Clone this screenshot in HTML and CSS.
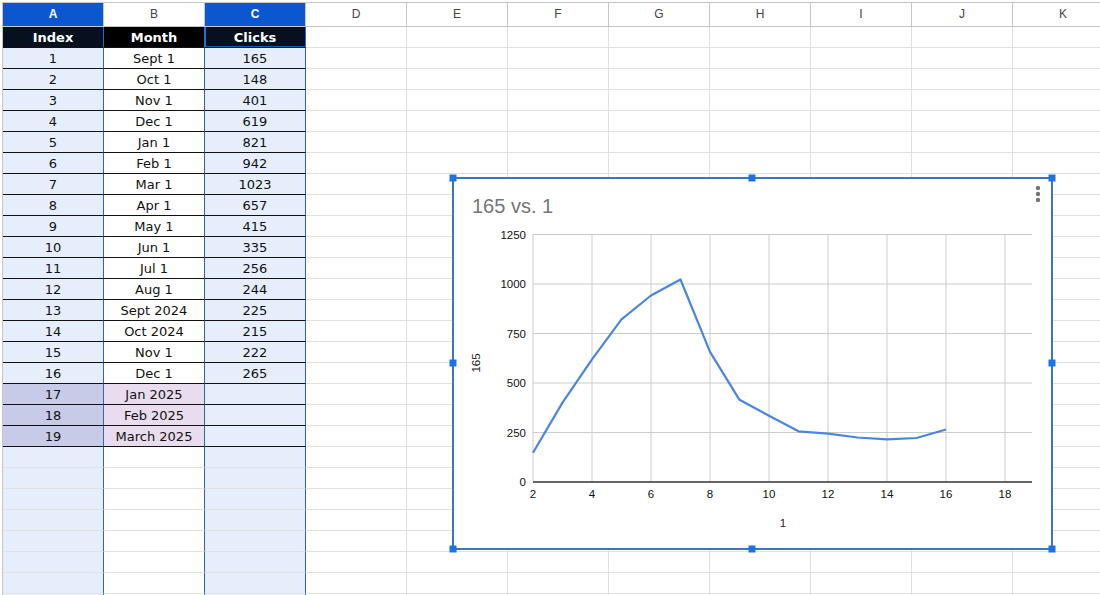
FILE: index.html
```html
<!DOCTYPE html>
<html lang="en">
<head>
    <meta charset="UTF-8">
    <meta name="viewport" content="width=device-width, initial-scale=1.0">
    <title>Clicks - Sheet</title>
    <link rel="stylesheet" href="styles.css">
</head>
<body>
    <div class="sheet" id="sheet"></div>

    <div class="chart">
        <svg width="600" height="371" viewBox="0 0 600 371">
            <rect class="frame" x="1" y="0" width="599" height="371"></rect>

            <text class="chart-title" x="20" y="35">165 vs. 1</text>
            <circle class="dot" cx="586" cy="10" r="2.2"></circle>
            <circle class="dot" cx="586" cy="16" r="2.2"></circle>
            <circle class="dot" cx="586" cy="22" r="2.2"></circle>

            <!-- gridlines -->
            <g class="grid">
                <line x1="81" y1="56.5" x2="580" y2="56.5"></line>
                <line x1="81" y1="106" x2="580" y2="106"></line>
                <line x1="81" y1="155.5" x2="580" y2="155.5"></line>
                <line x1="81" y1="205" x2="580" y2="205"></line>
                <line x1="81" y1="254.5" x2="580" y2="254.5"></line>
                <line x1="81" y1="56.5" x2="81" y2="304"></line>
                <line x1="140" y1="56.5" x2="140" y2="304"></line>
                <line x1="199" y1="56.5" x2="199" y2="304"></line>
                <line x1="258" y1="56.5" x2="258" y2="304"></line>
                <line x1="317" y1="56.5" x2="317" y2="304"></line>
                <line x1="376" y1="56.5" x2="376" y2="304"></line>
                <line x1="435" y1="56.5" x2="435" y2="304"></line>
                <line x1="494" y1="56.5" x2="494" y2="304"></line>
                <line x1="553" y1="56.5" x2="553" y2="304"></line>
            </g>
            <line class="baseline" x1="81" y1="304" x2="580" y2="304"></line>

            <!-- y axis labels -->
            <g class="ticks y-ticks">
                <text x="74" y="61">1250</text>
                <text x="74" y="110">1000</text>
                <text x="74" y="160">750</text>
                <text x="74" y="209">500</text>
                <text x="74" y="259">250</text>
                <text x="74" y="308">0</text>
            </g>

            <!-- x axis labels -->
            <g class="ticks x-ticks">
                <text x="81" y="320">2</text>
                <text x="140" y="320">4</text>
                <text x="199" y="320">6</text>
                <text x="258" y="320">8</text>
                <text x="317" y="320">10</text>
                <text x="376" y="320">12</text>
                <text x="435" y="320">14</text>
                <text x="494" y="320">16</text>
                <text x="553" y="320">18</text>
            </g>

            <text class="axis-title" x="331" y="349">1</text>
            <text class="axis-title" transform="translate(28 185) rotate(-90)">165</text>

            <polyline class="series" points="81,274.7 110.5,224.6 140,181.4 169.5,141.4 199,117.5 228.5,101.5 258,173.9 287.5,221.8 317,237.7 346.5,253.3 376,255.7 405.5,259.5 435,261.4 464.5,260 494,251.5"></polyline>

            <!-- resize handles -->
            <g class="handles">
                <rect x="-2.5" y="-3.5" width="7" height="7"></rect>
                <rect x="296.5" y="-3.5" width="7" height="7"></rect>
                <rect x="596.5" y="-3.5" width="7" height="7"></rect>
                <rect x="-2.5" y="181.5" width="7" height="7"></rect>
                <rect x="596.5" y="181.5" width="7" height="7"></rect>
                <rect x="-2.5" y="367.5" width="7" height="7"></rect>
                <rect x="296.5" y="367.5" width="7" height="7"></rect>
                <rect x="596.5" y="367.5" width="7" height="7"></rect>
            </g>
        </svg>
    </div>

    <script>
        const columns = 'ABCDEFGHIJK'.split('');
        const rows = [
            ['Index', 'Month', 'Clicks'],
            ['1', 'Sept 1', '165'],
            ['2', 'Oct 1', '148'],
            ['3', 'Nov 1', '401'],
            ['4', 'Dec 1', '619'],
            ['5', 'Jan 1', '821'],
            ['6', 'Feb 1', '942'],
            ['7', 'Mar 1', '1023'],
            ['8', 'Apr 1', '657'],
            ['9', 'May 1', '415'],
            ['10', 'Jun 1', '335'],
            ['11', 'Jul 1', '256'],
            ['12', 'Aug 1', '244'],
            ['13', 'Sept 2024', '225'],
            ['14', 'Oct 2024', '215'],
            ['15', 'Nov 1', '222'],
            ['16', 'Dec 1', '265'],
            ['17', 'Jan 2025', ''],
            ['18', 'Feb 2025', ''],
            ['19', 'March 2025', '']
        ];
        const totalRows = 28;
        const sheet = document.getElementById('sheet');

        function addCell(text, classes) {
            const cell = document.createElement('div');
            cell.className = 'cell ' + classes.join(' ');
            cell.textContent = text;
            sheet.appendChild(cell);
        }

        // Column letters
        columns.forEach((letter, c) => {
            const classes = ['head'];
            if (c === 0 || c === 2) classes.push('sel');
            addCell(letter, classes);
        });

        // Cells
        for (let r = 0; r < totalRows; r++) {
            for (let c = 0; c < columns.length; c++) {
                const classes = [];
                let text = '';
                if (c === 0 || c === 2) classes.push('picked');
                if (c < 3) classes.push('edge');
                if (r < rows.length && c < 3) {
                    classes.push('data');
                    text = rows[r][c];
                    if (r === 0) classes.push('title');
                    if (r === 0 && c === 2) classes.push('active');
                    if (r >= 17 && c === 0) classes.push('hl-a');
                    if (r >= 17 && c === 1) classes.push('hl-b');
                }
                addCell(text, classes);
            }
        }
    </script>
</body>
</html>
```

FILE: styles.css
```css
body {
    margin: 0;
    overflow: hidden;
    background: #fff;
    font-family: "DejaVu Sans", Verdana, sans-serif;
}
.sheet {
    display: grid;
    grid-template-columns: repeat(11, 101px);
    margin: 2px 0 0 2px;
    border-left: 1px solid #c4c7c5;
    border-top: 1px solid #c4c7c5;
}
.cell {
    box-sizing: border-box;
    height: 21px;
    padding-top: 1px;
    border-right: 1px solid #e1e1e1;
    border-bottom: 1px solid #e1e1e1;
    font-size: 13px;
    line-height: 19px;
    text-align: center;
    color: #111;
    white-space: nowrap;
    overflow: hidden;
}
.head {
    height: 24px;
    padding-top: 0;
    line-height: 23px;
    font-family: "Liberation Sans", Arial, sans-serif;
    font-size: 12px;
    color: #444;
    border-color: #c4c7c5;
}
.head.sel {
    background: #0b57d0;
    color: #fff;
    font-weight: bold;
}
.picked {
    background: #e6eefc;
}
.edge {
    border-right-color: #2a66c2;
}
.data {
    border-bottom-color: #111;
}
.title {
    background: #000;
    color: #fff;
    font-weight: bold;
}
.title.picked {
    background: #06101f;
}
.active {
    box-shadow: inset 1px 0 0 #1a73e8, inset 0 -1px 0 #1a5bb8;
}
.hl-a {
    background: #c7cbe8;
}
.hl-b {
    background: #e8dcee;
}

.chart {
    position: absolute;
    left: 452px;
    top: 178px;
    width: 600px;
    height: 371px;
    background: #fff;
}
.chart svg {
    display: block;
    overflow: visible;
    font-family: "Liberation Sans", Arial, sans-serif;
}
.frame {
    fill: #fff;
    stroke: #3f74c0;
    stroke-width: 2;
}
.chart-title {
    font-size: 20px;
    fill: #757575;
}
.dot {
    fill: #757575;
}
.grid line {
    stroke: #cccccc;
    stroke-width: 1;
}
.baseline {
    stroke: #333;
    stroke-width: 1.5;
}
.ticks text {
    font-size: 11.5px;
    fill: #111;
}
.y-ticks text {
    text-anchor: end;
}
.x-ticks text {
    text-anchor: middle;
}
.axis-title {
    font-size: 11.5px;
    fill: #222;
    text-anchor: middle;
}
.series {
    fill: none;
    stroke: #4a86e0;
    stroke-width: 2.2;
    stroke-linejoin: round;
}
.handles rect {
    fill: #1a73e8;
}
```
